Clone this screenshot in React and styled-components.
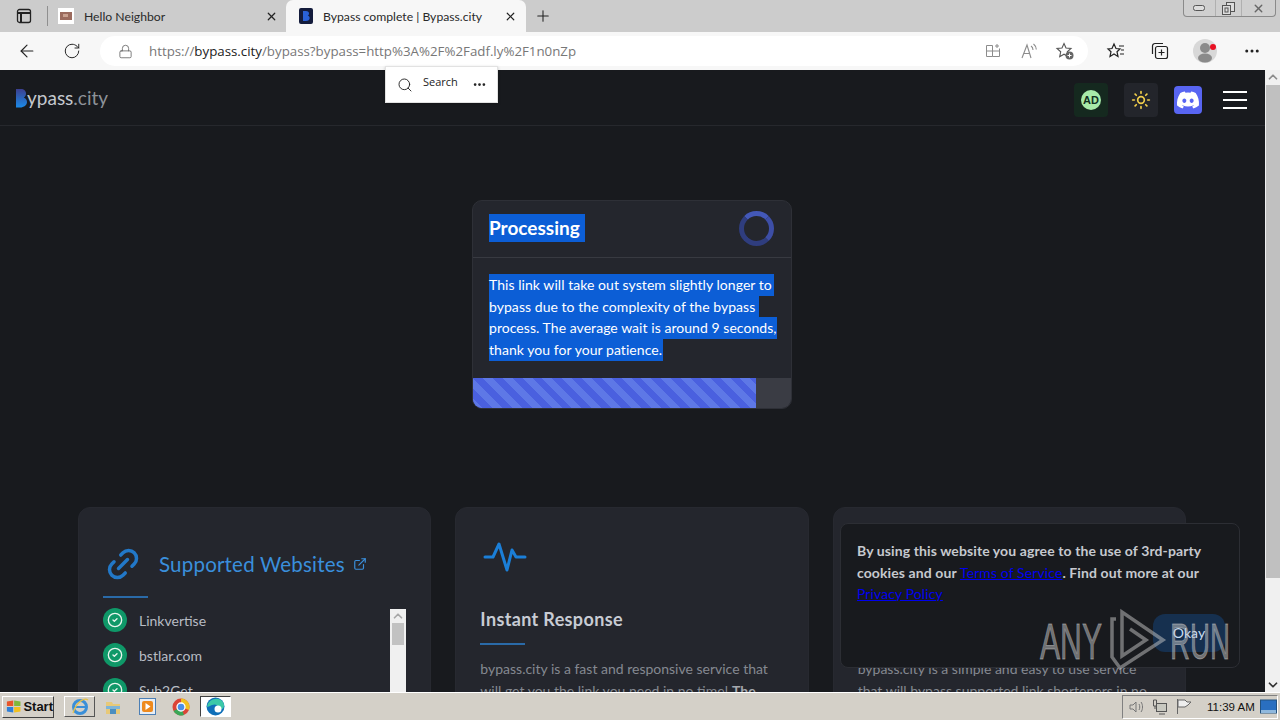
import React from "react";
import styled, { createGlobalStyle } from "styled-components";
import { ArrowLeft, RotateCw, Lock, Search, MoreHorizontal, Plus, X, Link2, ExternalLink, CheckCircle2, Sun, ChevronUp, ChevronDown } from "lucide-react";
import { FaDiscord } from "react-icons/fa";

const Global = createGlobalStyle`
  html, body { margin: 0; padding: 0; height: 100%; overflow: hidden; background: #181a1e; }
  * { box-sizing: border-box; }
  #root { height: 720px; }
`;
const Screen = styled.div`
  position: relative; width: 1280px; height: 720px; overflow: hidden;
  display: flex; flex-direction: column; font-family: "Lato", "Noto Sans", sans-serif;
`;
const TabStrip = styled.div`
  height: 32px; background: #cccccc; display: flex; align-items: stretch; flex: none;
  font-family: "Lato", "Noto Sans", sans-serif; font-size: 12.2px; color: #2a2a2a;
`;
const PanelSlot = styled.div`
  width: 47px; display: flex; align-items: center; justify-content: center; padding-right: 0;
`;
const TabDivider = styled.div`width: 1px; height: 20px; background: #8f8f8f; align-self: center;`;
const Tab = styled.div`
  display: flex; align-items: center; height: 32px;
  width: ${p => p.$w}px; padding: 0 ${p => p.$pr}px 0 ${p => p.$pl}px;
  background: ${p => (p.$active ? "#f7f7f7" : "transparent")};
  border-radius: ${p => (p.$active ? "7px 7px 0 0" : "0")};
`;
const TabTitle = styled.span`flex: 1; margin-left: ${p => p.$gap}px; white-space: nowrap; overflow: hidden;`;
const NewTab = styled.div`width: 34px; display: flex; align-items: center; justify-content: center;`;
const Spacer = styled.div`flex: 1;`;
const WinControls = styled.div`
  display: flex; width: 93px; height: 17px; margin-right: 4px;
  border: 1px solid #8a8a8a; border-top: 0; border-radius: 0 0 4px 4px; background: #cfcfcf;
`;
const WinBtn = styled.div`
  flex: ${p => p.$f || 1}; display: flex; align-items: center; justify-content: center;
  border-left: ${p => (p.$sep ? "1px solid #b0b0b0" : "0")};
`;
const Toolbar = styled.div`
  height: 38px; flex: none; background: #f7f7f7; display: flex; align-items: center; padding-left: 10px;
`;
const ToolSlot = styled.div`
  width: ${p => p.$w || 34}px; margin-right: ${p => p.$mr || 0}px; display: flex; align-items: center; justify-content: center; flex: none;
  color: #222;
`;
const Omnibox = styled.div`
  width: 988px; height: 30px; background: #fff; border-radius: 15px; display: flex; align-items: center;
  padding: 0 5px 0 18px; flex: none; margin-right: 6px;
`;
const Url = styled.div`
  flex: 1; margin-left: 16px; font: 13.3px "Open Sans", "Noto Sans", sans-serif; color: #777; white-space: nowrap;
  b { color: #222; font-weight: 400; }
`;
const Viewport = styled.div`flex: 1; min-height: 0; display: flex;`;
const Page = styled.div`flex: 1; overflow: hidden; background: #181a1e; color: #ccc;`;
const Nav = styled.div`
  height: 56px; border-bottom: 1px solid #26282d; display: flex; align-items: center; padding: 4px 18px 0 15px;
`;
const Logo = styled.div`display: flex; align-items: center; margin-bottom: 4px; font-size: 19px; color: #c4c8ce; span { color: #8d9299; }`;
const NavBtn = styled.div`
  width: ${p => p.$w || 34}px; height: ${p => p.$h || 34}px; margin-left: ${p => p.$ml || 0}px; border-radius: 4px;
  background: ${p => p.$bg}; display: flex; align-items: center; justify-content: center; color: ${p => p.$fg || "#fff"};
`;
const AdBadge = styled.div`
  width: 20px; height: 20px; border-radius: 50%; background: #a8eaa9; color: #12301f;
  font: 700 11px "Liberation Sans", sans-serif; display: flex; align-items: center; justify-content: center;
`;
const Burger = styled.div`
  width: 24px; height: 18px; margin-left: 21px; display: flex; flex-direction: column; justify-content: space-between;
  span { height: 2px; background: #fff; display: block; }
`;
const Stage = styled.div`display: flex; justify-content: center; padding: 74px 1px 0 0;`;
const ProcessCard = styled.div`
  width: 320px; height: 209px; background: #24262d; border: 1px solid #2e3037; border-radius: 10px; overflow: hidden;
  display: flex; flex-direction: column;
`;
const ProcessHead = styled.div`
  height: 57px; flex: none; border-bottom: 1px solid #383a41; display: flex; align-items: center; justify-content: space-between;
  padding: 0 17px 2px 16px;
`;
const Sel = styled.span`background: #0c5ed6; color: #fff;`;
const ProcessTitle = styled(Sel)`
  font-weight: 700; font-size: 19px; line-height: 28px; padding-right: 5px; display: block;
`;
const Spinner = styled.div`
  width: 35px; height: 35px; border-radius: 50%; border: 5px solid #2f3d7e; border-top-color: #4358b8; border-right-color: #3d4ea6;
`;
const ProcessBody = styled.div`flex: 1; padding: 16px 16px 0; font-size: 14px; line-height: 21.7px; letter-spacing: .05px;`;
const SelLine = styled(Sel)`display: block; width: ${p => p.$w}px; white-space: nowrap;`;
const Track = styled.div`height: 30px; flex: none; background: #3a3c44;`;
const Fill = styled.div`
  height: 100%; background-color: #4a60df;
  background-image: repeating-linear-gradient(45deg, #5e78e6 0 7px, #4a60df 7px 14px);
`;
const Features = styled.div`
  display: grid; grid-template-columns: repeat(3, 353.33px); gap: 24px; justify-content: start; padding: 98px 0 0 78px;
`;
const Feature = styled.div`
  height: 320px; background: #24262d; border: 1px solid #272930; border-radius: 12px; padding: ${p => p.$pt}px 24px 0;
`;
const TitleRow = styled.div`display: flex; align-items: center; height: 36px; color: #3a8fdc;`;
const LinkTitle = styled.div`font-size: 20.5px; margin-left: 17px; margin-right: 8px; letter-spacing: .2px;`;
const Rule = styled.div`width: 45px; height: 2px; background: #2a6aa8; margin: ${p => p.$m};`;
const ListBox = styled.div`display: flex; height: 200px;`;
const List = styled.div`flex: 1; display: flex; flex-direction: column; gap: 11px; margin-top: -1px;`;
const Row = styled.div`display: flex; align-items: center; height: 24px; font-size: 14px; color: #b8bcc4;`;
const Tick = styled.div`
  width: 24px; height: 24px; border-radius: 50%; background: #0f9868; margin-right: 12px; color: #e8f5ee;
  display: flex; align-items: center; justify-content: center;
`;
const MiniBar = styled.div`width: 16px; background: #f0f0f0; display: flex; flex-direction: column; align-items: center; color: #a8a8a8;`;
const MiniThumb = styled.div`width: 12px; height: 22px; background: #c2c2c2;`;
const FeatureIcon = styled.svg`display: block; margin-left: 3px;`;
const FeatureTitle = styled.div`font-size: 18px; font-weight: 700; color: #c8ccd4; margin-top: 34px; letter-spacing: .35px; line-height: 24px;`;
const Para = styled.div`font-size: 14px; line-height: 21.5px; color: #858991; strong { color: #a5a8ae; }`;
const PageBar = styled.div`width: 15px; flex: none; background: #f0f0f0; display: flex; flex-direction: column; align-items: center; color: #8c8c8c;`;
const PageThumb = styled.div`width: 14px; height: 493px; background: #c0c0c0; margin-top: 1px;`;
const PopSearch = styled.div`
  position: absolute; left: 385px; top: 66px; width: 113px; height: 37px; background: #fff; display: flex; align-items: center;
  padding: 0 10px 0 11px; border: 1px solid #e2e2e2; box-shadow: 0 1px 3px rgba(0,0,0,.2);
  font: 11px "Open Sans", sans-serif; color: #222;
`;
const PopLabel = styled.span`margin: -7px 0 0 10px; flex: 1;`;
const Cookie = styled.div`
  position: absolute; left: 840px; top: 523px; width: 400px; height: 145px; background: #181a1e; border: 1px solid #2c2e34; border-radius: 8px;
  padding: 16px; font-size: 14px; line-height: 21.6px; font-weight: 700; color: #c6c9cf; letter-spacing: .1px;
  a { color: #0000ee; text-decoration: underline; font-weight: 400; }
`;
const Okay = styled.div`
  position: absolute; right: 14px; bottom: 15px; width: 72px; height: 38px; border-radius: 12px; background: #16304f; color: #c9def2;
  display: flex; align-items: center; justify-content: center; font-weight: 400;
`;
const Watermark = styled.svg`position: absolute; left: 1036px; top: 606px; pointer-events: none;`;
const Taskbar = styled.div`
  height: 28px; flex: none; background: #d4d0c8; border-top: 1px solid #fff; display: flex; align-items: center; padding-left: 2px;
  font-family: "Liberation Sans", sans-serif;
`;
const StartBtn = styled.div`
  border: 1px solid; border-color: #fff #404040 #404040 #fff;
  width: 52px; height: 22px; display: flex; align-items: center; padding-left: 3px; gap: 2px; font-size: 13px; font-weight: 700; color: #111;
`;
const QuickBtn = styled.div`
  width: ${p => p.$w}px; height: 21px; margin-left: ${p => p.$ml}px; display: flex; align-items: center; justify-content: center;
  ${p => (p.$pressed ? "border: 1px solid; border-color: #404040 #fff #fff #404040; background: #fff;" : p.$raised ? "border: 1px solid; border-color: #fff #555 #555 #fff;" : "")}
`;
const Tray = styled.div`
  height: 24px; width: 156px; margin-left: auto; margin-right: 2px; border: 1px solid; border-color: #808080 #fff #fff #808080;
  display: flex; align-items: center; padding-left: 1px; font-size: 11.5px; color: #111;
`;
const TrayIcon = styled.div`width: 24px; display: flex; justify-content: center;`;
const Clock = styled.span`margin-left: 11px; white-space: nowrap;`;
const TrayEnd = styled.div`margin-left: 5px; display: flex;`;

const BLogo = () => (
  <svg width="12" height="20" viewBox="0 0 12 20" style={{ marginRight: 0 }}>
    <defs><linearGradient id="bl" x1="0" y1="0" x2="0" y2="1"><stop offset="0" stopColor="#3c3f8f" /><stop offset="1" stopColor="#1b8ae8" /></linearGradient></defs>
    <path d="M1 1h5c3 0 5 2 5 4.500 0 2-1 3.400-2.300 4 2 .7 3.300 2.400 3.300 4.500C12 17 9 19.500 5 19.500L1 19.500Z" fill="url(#bl)" />
  </svg>
);
const Pulse = () => (
  <FeatureIcon width="44" height="32" viewBox="0 0 44 32" fill="none" stroke="#1b7fd8" strokeWidth="3" strokeLinejoin="round" strokeLinecap="round">
    <polyline points="2,16 10,16 16,3 24,29 29,9 33,16 42,16" />
  </FeatureIcon>
);

export default function App() {
  return (
    <Screen>
      <Global />
      <TabStrip>
        <PanelSlot>
          <svg width="16" height="16" viewBox="0 0 16 16" fill="none" stroke="#222" strokeWidth="1.300"><rect x="1.500" y="1.500" width="13" height="13" rx="2" /><path d="M1.500 5h13M5 5v9.500" strokeWidth="2" /></svg>
        </PanelSlot>
        <TabDivider />
        <Tab $w={238} $pl={10} $pr={8}>
          <svg width="16" height="16" viewBox="0 0 16 16"><rect width="16" height="16" fill="#fff" /><rect x="2" y="4" width="12" height="8" fill="#9b6b5e" /><rect x="5" y="6" width="5" height="3" fill="#c9a190" /></svg>
          <TabTitle $gap={10}>Hello Neighbor</TabTitle>
          <X size={13} strokeWidth={2.200} color="#222" />
        </Tab>
        <Tab $active $w={240} $pl={13} $pr={9}>
          <svg width="14" height="16" viewBox="0 0 14 16"><rect width="14" height="16" rx="2" fill="#141c3c" /><path d="M4 3h3c2 0 3 1 3 2.500 0 1-.5 1.700-1.200 2 1.200.4 1.900 1.300 1.900 2.500 0 2-1.500 3-3.700 3H4Z" fill="#2a62d8" /></svg>
          <TabTitle $gap={10}>Bypass complete | Bypass.city</TabTitle>
          <X size={13} strokeWidth={2.200} color="#222" />
        </Tab>
        <NewTab><Plus size={18} strokeWidth={1.400} color="#222" /></NewTab>
        <Spacer />
        <WinControls>
          <WinBtn $f={1.200}><svg width="12" height="6"><rect x=".5" y=".5" width="11" height="5" rx="2" fill="#ddd" stroke="#555" /></svg></WinBtn>
          <WinBtn $sep><svg width="13" height="13" fill="#ddd" stroke="#555"><rect x="4.500" y=".5" width="8" height="9" /><rect x=".5" y="3.500" width="8" height="9" /><rect x="3" y="6" width="3" height="4" /></svg></WinBtn>
          <WinBtn $sep $f={1.300}><X size={13} strokeWidth={2.500} color="#666" /></WinBtn>
        </WinControls>
      </TabStrip>

      <Toolbar>
        <ToolSlot $mr={11}><ArrowLeft size={20} strokeWidth={1.400} /></ToolSlot>
        <ToolSlot $mr={11}><RotateCw size={18} strokeWidth={1.300} /></ToolSlot>
        <Omnibox>
          <Lock size={15} strokeWidth={1.200} color="#555" />
          <Url>https://<b>bypass.city</b>/bypass?bypass=http%3A%2F%2Fadf.ly%2F1n0nZp</Url>
          <ToolSlot $w={36}><svg width="16" height="16" viewBox="0 0 16 16" fill="none" stroke="#8c8c8c"><path d="M1.500 2.500h6v11h-6zM1.500 8h13M7.500 13.500h7V5.500M12 1v4M10 3h4" /></svg></ToolSlot>
          <ToolSlot $w={36}><svg width="18" height="18" viewBox="0 0 18 18" fill="none" stroke="#8c8c8c" strokeWidth="1.100"><path d="M2 16 7 3l4 13M3.800 11.500h6M11 4c1.500 1 2 2.300 2 4M13.500 2c2 1.500 2.800 3.500 2.800 5.500" /></svg></ToolSlot>
          <ToolSlot $w={36}>
            <svg width="20" height="20" viewBox="0 0 20 20"><path d="M9 2.500 11 7l5 .5-3.700 3.300 1 4.900L9 13.200 4.700 15.700l1-4.900L2 7.500 7 7Z" fill="none" stroke="#555" strokeWidth="1.100" /><circle cx="14.500" cy="14.500" r="4" fill="#666" /><path d="M14.500 12.500v4M12.500 14.500h4" stroke="#fff" /></svg>
          </ToolSlot>
        </Omnibox>
        <ToolSlot $w={44}><svg width="20" height="20" viewBox="0 0 20 20" fill="none" stroke="#222" strokeWidth="1.200"><path d="M8 3l2 4.500 4 .4-3 2.800 1 4.800-4-2.500-4 2.500 1-4.800-3-2.800 4-.4Z" /><path d="M13 5h5M15 9h3M14 13h4" /></svg></ToolSlot>
        <ToolSlot $w={44} $mr={1}><svg width="20" height="20" viewBox="0 0 20 20" fill="none" stroke="#222" strokeWidth="1.200"><rect x="5.500" y="5.500" width="12" height="12" rx="2" /><path d="M11.500 8.500v6M8.500 11.500h6M13 2.500H5a2.500 2.500 0 0 0-2.500 2.500v8" /></svg></ToolSlot>
        <ToolSlot $w={46}><svg width="26" height="26" viewBox="0 0 26 26"><circle cx="12" cy="13" r="12" fill="#d8d8d8" /><circle cx="12" cy="10" r="5" fill="#8a8a8a" /><ellipse cx="12" cy="20" rx="7" ry="4.500" fill="#8a8a8a" /><circle cx="20" cy="9" r="3" fill="#e81123" /></svg></ToolSlot>
        <ToolSlot $w={46}><MoreHorizontal size={18} strokeWidth={2} /></ToolSlot>
      </Toolbar>

      <Viewport>
        <Page>
          <Nav>
            <Logo><BLogo />ypass<span>.city</span></Logo>
            <Spacer />
            <NavBtn $bg="#15291f"><AdBadge>AD</AdBadge></NavBtn>
            <NavBtn $bg="#23252b" $ml={16} $fg="#f2cf4b"><Sun size={20} strokeWidth={2} /></NavBtn>
            <NavBtn $bg="#5865f2" $w={28} $h={28} $ml={16}><FaDiscord size={24} /></NavBtn>
            <Burger><span /><span /><span /></Burger>
          </Nav>
          <Stage>
            <ProcessCard>
              <ProcessHead>
                <ProcessTitle>Processing</ProcessTitle>
                <Spinner />
              </ProcessHead>
              <ProcessBody>
                <SelLine $w={285}>This link will take out system slightly longer to</SelLine>
                <SelLine $w={270}>bypass due to the complexity of the bypass</SelLine>
                <SelLine $w={288}>process. The average wait is around 9 seconds,</SelLine>
                <SelLine $w={174}>thank you for your patience.</SelLine>
              </ProcessBody>
              <Track><Fill style={{ width: "89%" }} /></Track>
            </ProcessCard>
          </Stage>
          <Features>
            <Feature $pt={38}>
              <TitleRow>
                <Link2 size={38} strokeWidth={2.200} color="#2278c8" style={{ marginLeft: 1, transform: "rotate(-45deg)" }} />
                <LinkTitle>Supported Websites</LinkTitle>
                <ExternalLink size={14} strokeWidth={2} />
              </TitleRow>
              <Rule $m="14px 0 11px" />
              <ListBox>
                <List>
                  {["Linkvertise", "bstlar.com", "Sub2Get"].map(n => (
                    <Row key={n}><Tick><CheckCircle2 size={16} strokeWidth={2} /></Tick>{n}</Row>
                  ))}
                </List>
                <MiniBar><ChevronUp size={14} strokeWidth={3} /><MiniThumb /></MiniBar>
              </ListBox>
            </Feature>
            <Feature $pt={33}>
              <Pulse />
              <FeatureTitle>Instant Response</FeatureTitle>
              <Rule $m="12px 0 13px" />
              <Para>bypass.city is a fast and responsive service that<br />will get you the link you need in no time! <strong>The</strong></Para>
            </Feature>
            <Feature $pt={33}>
              <Pulse />
              <FeatureTitle>Simple</FeatureTitle>
              <Rule $m="12px 0 13px" />
              <Para>bypass.city is a simple and easy to use service<br />that will bypass supported link shorteners in no</Para>
            </Feature>
          </Features>
        </Page>
        <PageBar>
          <ChevronUp size={14} strokeWidth={3} />
          <PageThumb />
          <Spacer />
          <ChevronDown size={14} strokeWidth={3} color="#333" />
        </PageBar>
      </Viewport>

      <Taskbar>
        <StartBtn>
          <svg width="17" height="15" viewBox="0 0 17 15"><path d="M1 2l7-1v6H1z" fill="#e8562a" /><path d="M9 1l7 1v5H9z" fill="#7fb83a" /><path d="M1 8h7v6l-7-1z" fill="#2f7fd8" /><path d="M9 8h7v5l-7 1z" fill="#f2c01e" /></svg>
          Start
        </StartBtn>
        <QuickBtn $w={31} $ml={10} $raised><svg width="20" height="20" viewBox="0 0 20 20" fill="none"><circle cx="10" cy="10" r="6.500" stroke="#3a8fd8" strokeWidth="3" /><path d="M4 10h12" stroke="#3a8fd8" strokeWidth="2" /><path d="M3 16C7 3 15 1 18 3" stroke="#e8c24a" strokeWidth="1.200" /></svg></QuickBtn>
        <QuickBtn $w={20} $ml={8}><svg width="18" height="18" viewBox="0 0 18 18"><path d="M2 4h6l1 2h7v10H2z" fill="#e8c978" /><rect x="2" y="8" width="14" height="3" fill="#7fb5d8" /><rect x="6" y="11" width="6" height="5" fill="#4c8fc0" /></svg></QuickBtn>
        <QuickBtn $w={20} $ml={14}><svg width="17" height="17" viewBox="0 0 17 17"><rect x=".5" y=".5" width="16" height="16" fill="#e8eef5" stroke="#4c7fb5" /><rect x="3" y="3" width="11" height="11" rx="2" fill="#ee8a1e" /><path d="M6.500 5l5 3.500-5 3.500z" fill="#fff" /></svg></QuickBtn>
        <QuickBtn $w={20} $ml={14}><svg width="18" height="18" viewBox="0 0 18 18"><circle cx="9" cy="9" r="8.500" fill="#db4437" /><path d="M9 9 1.500 13A8.500 8.500 0 0 0 12 17z" fill="#3aa757" /><path d="M9 .5A8.500 8.500 0 0 1 17 12L9 9z" fill="#f2c01e" /><circle cx="9" cy="9" r="4" fill="#4a8fe8" stroke="#fff" strokeWidth="1.300" /></svg></QuickBtn>
        <QuickBtn $w={31} $ml={9} $pressed><svg width="19" height="19" viewBox="0 0 19 19"><circle cx="9.500" cy="9.500" r="9" fill="#0f6fb8" /><path d="M1 10C2 3 9 .5 14 2.500 18 4.500 19 9 17 11.500c-2 1.500-5 1-5-1 0-2.500-3-4-6-2.500C3.500 9 2 10 1 10z" fill="#3cc8a8" /><circle cx="12" cy="12" r="3.500" fill="#fff" /></svg></QuickBtn>
        <Tray>
          <TrayIcon><svg width="16" height="16" viewBox="0 0 16 16" fill="none" stroke="#777"><path d="M2 6h3l3-3v10l-3-3H2zM11 5c1 1.500 1 4.500 0 6M13 3c2 2.500 2 7.500 0 10" /></svg></TrayIcon>
          <TrayIcon><svg width="18" height="16" viewBox="0 0 18 16" fill="none" stroke="#555"><rect x="5.500" y="4.500" width="10" height="8" fill="#c8c8c0" /><path d="M8 15h6M2.500 1v6h3V1zM4 7v3" /></svg></TrayIcon>
          <TrayIcon><svg width="18" height="17" viewBox="0 0 18 17" fill="none" stroke="#666"><path d="M2.500 1v15M3 2h7l2 2h4l-3 3-3 2H3z" fill="#eee" /></svg></TrayIcon>
          <Clock>11:39 AM</Clock>
          <TrayEnd><svg width="17" height="16" viewBox="0 0 17 16"><rect x=".5" y="1" width="16" height="13" fill="#2a6fc0" stroke="#23527f" /><rect x="1" y="11" width="15" height="3" fill="#8fb8dd" /></svg></TrayEnd>
        </Tray>
      </Taskbar>

      <PopSearch>
        <Search size={16} strokeWidth={1.400} />
        <PopLabel>Search</PopLabel>
        <MoreHorizontal size={15} strokeWidth={2.400} />
      </PopSearch>

      <Cookie>
        By using this website you agree to the use of 3rd-party cookies and our <a>Terms of Service</a>. Find out more at our <a>Privacy Policy</a>
        <Okay>Okay</Okay>
      </Cookie>

      <Watermark width="200" height="70" viewBox="0 0 200 70" fill="none">
        <g fill="#c8c8c8" fillOpacity=".5" stroke="#c8c8c8" strokeOpacity=".5" strokeWidth=".8" fontFamily="Liberation Sans, sans-serif" fontSize="50">
          <text x="4" y="53" textLength="62" lengthAdjust="spacingAndGlyphs">ANY</text>
          <text x="134" y="53" textLength="60" lengthAdjust="spacingAndGlyphs">RUN</text>
        </g>
        <path d="M80 13h-4v38l8 11 43-28L86 6v44l24-16-16-11" stroke="#c8c8c8" strokeOpacity=".5" strokeWidth="3.500" />
      </Watermark>
    </Screen>
  );
}
